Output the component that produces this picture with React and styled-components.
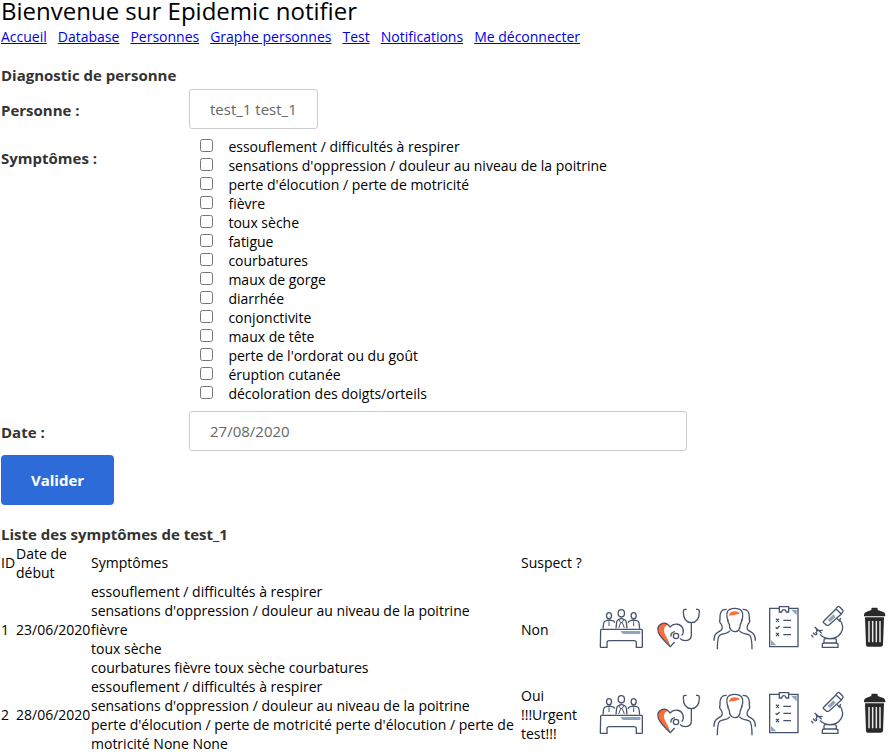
import React from "react";
import styled, { createGlobalStyle } from "styled-components";

const GlobalStyle = createGlobalStyle`
  * { box-sizing: border-box; }
  body {
    margin: 0;
    background: #fff;
    color: #000;
    font: 14px/19px "Open Sans", sans-serif;
  }
`;

const Page = styled.main`
  width: 892px;
  height: 752px;
  padding-left: 1px;
  overflow: hidden;
`;
const Title = styled.h1`
  margin: 0;
  font-size: 24px;
  font-weight: 400;
  line-height: 22px;
`;
const Nav = styled.nav`
  display: flex;
  gap: 11px;
  margin-top: 5px;
`;
const NavLink = styled.a`
  color: #0000ee;
  text-decoration: underline;
`;
const Heading = styled.h2`
  margin: ${(p) => p.$top}px 0 0;
  color: #333;
  font-size: 15px;
  font-weight: 700;
  line-height: 19px;
`;
const Form = styled.form`
  display: block;
`;
const Field = styled.div`
  display: grid;
  grid-template-columns: 188px 1fr;
  margin-top: ${(p) => p.$top}px;
`;
const Label = styled.label`
  padding-top: ${(p) => p.$offset}px;
  color: #333;
  font-size: 15px;
  font-weight: 700;
`;
const Control = styled.div`
  width: ${(p) => p.$width}px;
  height: 40px;
  padding: 0 20px;
  border: 1px solid #ccc;
  border-radius: 3px;
  color: #666;
  font-size: 15px;
  line-height: 39px;
`;
const Choices = styled.ul`
  margin: 0;
  padding: 0 0 0 11px;
  list-style: none;
`;
const Choice = styled.li`
  display: flex;
  height: 19px;
`;
const Check = styled.input`
  width: 13px;
  height: 13px;
  margin: 2px 15.4px 0 0;
`;
const Submit = styled.button`
  display: block;
  width: 113px;
  height: 50px;
  margin-top: 4px;
  padding: 0;
  border: 0;
  border-radius: 4px;
  background: #2d6cd8;
  color: #fff;
  font: 700 15px/50px "Open Sans", sans-serif;
`;
const Row = styled.div`
  display: grid;
  grid-template-columns: 15px 75px 430px 77px 1fr;
  align-items: center;
  height: ${(p) => p.$height}px;
`;
const Cell = styled.div`
  margin-top: ${(p) => p.$lift || 0}px;
  white-space: pre-line;
`;
const Actions = styled.div`
  display: flex;
  height: 48px;
  align-self: center;
  margin-top: ${(p) => p.$shift || 0}px;
`;
const Icon = styled.svg`
  display: block;
  flex: none;
  width: ${(p) => p.$width}px;
  height: 48px;
  margin-left: ${(p) => p.$gap || 0}px;
  fill: none;
  stroke: #46536b;
  stroke-width: 3.9;
`;

const Meeting = () => (
  <Icon $width={48} viewBox="24 33 144 144">
    <path d="M39 104l2-17q1-6 8-7l8-2 10 2q6 1 7 6M78 103l2-19q1-6 7-8l7-3 8 3q6 2 7 8l2 19M114 86q2-5 8-6l9-2 9 2q6 1 7 7l2 17" />
    <ellipse cx="57" cy="65" rx="7.5" ry="9" />
    <ellipse cx="94" cy="58" rx="9.5" ry="11" />
    <ellipse cx="131" cy="65" rx="7.5" ry="9" />
    <path d="M57 82v14M131 82v14" strokeWidth="3" />
    <path d="M86 76l6 10 4 0 6-10M92 86l-6 16M97 86l6 16" strokeWidth="3" />
    <path d="M34 106h121q2 0 2 3v49q0 2-2 2h-16v-14q0-6-7-6H58q-7 0-7 6v14H33q-2 0-2-2l1-49q0-3 2-3z" />
    <path d="M91 111h60v9H99z" fill="#8da5bc" stroke="none" />
  </Icon>
);
const Stethoscope = () => (
  <Icon $width={48} $gap={9} viewBox="195 33 144 144">
    <path d="M241 157q-29-25-36-43c-6-22 14-34 31-21q-15 2-14 17c1 14 13 22 19 47z" fill="#ff6c37" stroke="none" />
    <path d="M254 144l-13 14q-29-26-36-43c-7-24 20-38 35-16 12-14 34-10 39 6q3 12-4 20M243 128q-2-13 12-15" />
    <circle cx="258" cy="126" r="8" />
    <path d="M290 46h-5q-5 0-5 7 0 32 24 33 24-1 24-33 0-7-5-7h-5M304 87v36q0 16-17 17-11 0-17-7" />
  </Icon>
);
const Patients = () => (
  <Icon $width={48} $gap={7} viewBox="360 33 144 144">
    <path d="M413 76q1 10 5 15 0 21 16 22t17-22q3-5 5-15" />
    <path d="M414 82q-9-30 5-36 15-6 30 0 15 7 6 36" />
    <path d="M419 110c-2 10-21 7-30 14-6 5-7 22-7 42M449 110c2 10 21 7 30 14 6 5 7 22 7 42M410 46q-22-2-20 30-4 7 4 15 6 13-1 18l-10 6q-11 6-11 25M458 46q22-2 20 30 4 7-4 15-6 13 1 18l10 6q11 6 11 25" />
    <path d="M417 67q1-15 17-15 14 1 15 7-14 2-19 5-9-1-13 3z" fill="#ff6c37" stroke="none" />
  </Icon>
);
const Checklist = () => (
  <Icon $width={40} $gap={6} viewBox="522 33 120 144">
    <path d="M568 43h-29v115h85V43h-29" />
    <path d="M568 54V38h28v16h-7q-2-7-7-7-6 0-7 7z" />
    <path d="M603 47h17v17zM543 138v16h16z" fill="#8da5bc" stroke="none" />
    <path d="M580 79h23M580 100h23M580 122h23M558 74l9 9m0-9l-9 9M557 100l4 4 8-8M558 117l9 9m0-9l-9 9" />
  </Icon>
);
const Microscope = () => (
  <Icon $width={40} $gap={4} viewBox="654 33 120 144">
    <path d="M701 82l37-37 16 15-37 33q-5 3-9-1l-7-6q-3-2 0-4zM737 44l6-6q3-2 6 1l9 9q3 3 0 6l-4 6" />
    <path d="M713 78l17-17 7 7-17 16z" fill="#8da5bc" stroke="none" />
    <path d="M741 73l7 8 4-9M750 78c20 29-3 56-29 56q-19 0-31-13" />
    <path d="M702 147v-9q0-4 4-4h28q5 0 5 4v9M697 160v-8q0-5 6-5h34q7 0 7 5v8z" />
    <path d="M674 99l21 19M678 103q6 12-2 14M685 110l13-1M681 117l-2 6M669 116l8 8M664 123l6 7" />
  </Icon>
);
const Trash = () => (
  <Icon $width={26} $gap={14} viewBox="816 33 78 144">
    <path d="M844 48v-4q0-3 3-3h13q3 0 3 3v4l17 6q6 3 6 9v4h-64v-4q0-6 6-9z" fill="#292929" stroke="none" />
    <path d="M825 70h57l-3 83q-1 5-7 5h-38q-6 0-6-5z" fill="#292929" stroke="none" />
    <path d="M837 81v64M848 81v64M859 81v64M870 81v64" stroke="#e8e8e8" strokeWidth="4.5" />
  </Icon>
);

const links = ["Accueil", "Database", "Personnes", "Graphe personnes", "Test", "Notifications", "Me déconnecter"];
const symptoms = [
  "essouflement / difficultés à respirer",
  "sensations d'oppression / douleur au niveau de la poitrine",
  "perte d'élocution / perte de motricité",
  "fièvre", "toux sèche", "fatigue", "courbatures", "maux de gorge",
  "diarrhée", "conjonctivite", "maux de tête",
  "perte de l'ordorat ou du goût", "éruption cutanée",
  "décoloration des doigts/orteils",
];
const records = [
  {
    id: 1, date: "23/06/2020", suspect: "Non", height: 95, shift: -2, lift: 0,
    text: `${symptoms[0]}\n${symptoms[1]}\nfièvre\ntoux sèche\ncourbatures fièvre toux sèche courbatures`,
  },
  {
    id: 2, date: "28/06/2020", suspect: "Oui\n!!!Urgent\ntest!!!", height: 76, shift: 0, lift: -2,
    text: `${symptoms[0]}\n${symptoms[1]}\nperte d'élocution / perte de motricité perte d'élocution / perte de\nmotricité None None`,
  },
];

export default function App() {
  return (
    <Page>
      <GlobalStyle />
      <Title>Bienvenue sur Epidemic notifier</Title>
      <Nav>{links.map((l) => <NavLink href="#" key={l}>{l}</NavLink>)}</Nav>
      <Heading $top={20}>Diagnostic de personne</Heading>
      <Form>
        <Field $top={4}>
          <Label $offset={12}>Personne :</Label>
          <Control $width={129}>test_1 test_1</Control>
        </Field>
        <Field $top={8}>
          <Label $offset={12}>Symptômes :</Label>
          <Choices>
            {symptoms.map((s) => <Choice key={s}><Check type="checkbox" />{s}</Choice>)}
          </Choices>
        </Field>
        <Field $top={8}>
          <Label $offset={12}>Date :</Label>
          <Control $width={498}>27/08/2020</Control>
        </Field>
        <Submit type="button">Valider</Submit>
      </Form>
      <Heading $top={20}>Liste des symptômes de test_1</Heading>
      <Row $height={38}>
        <Cell $lift={-2}>ID</Cell>
        <Cell>{"Date de\ndébut"}</Cell>
        <Cell $lift={-2}>Symptômes</Cell>
        <Cell $lift={-2}>Suspect ?</Cell>
      </Row>
      {records.map((r) => (
        <Row key={r.id} $height={r.height}>
          <Cell $lift={r.lift}>{r.id}</Cell>
          <Cell $lift={r.lift}>{r.date}</Cell>
          <Cell>{r.text}</Cell>
          <Cell $lift={r.lift}>{r.suspect}</Cell>
          <Actions $shift={r.shift}>
            <Meeting />
            <Stethoscope />
            <Patients />
            <Checklist />
            <Microscope />
            <Trash />
          </Actions>
        </Row>
      ))}
    </Page>
  );
}
